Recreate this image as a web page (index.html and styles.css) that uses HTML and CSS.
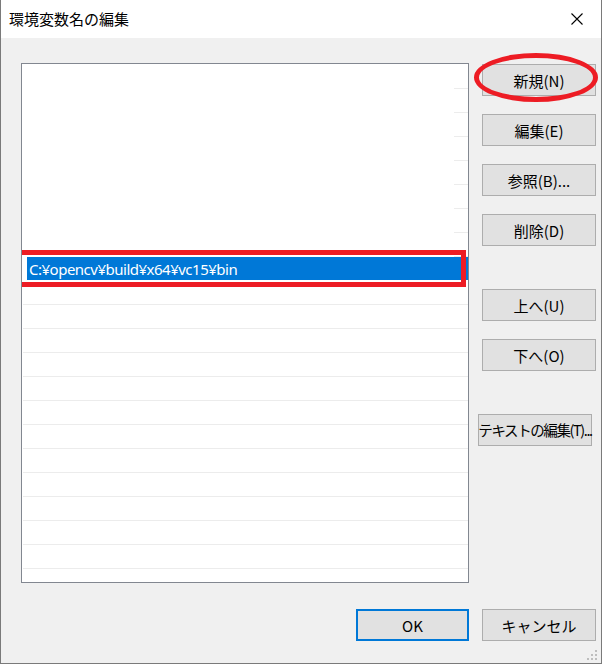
FILE: index.html
```html
<!DOCTYPE html>
<html lang="ja">
<head>
<meta charset="utf-8">
<title>環境変数名の編集</title>
<link rel="stylesheet" href="styles.css">
</head>
<body>
<div class="window">
  <div class="titlebar">
    <span class="title">環境変数名の編集</span>
    <span class="close">
      <svg width="12" height="12" viewBox="0 0 12 12"><path d="M0.5 0.5 L11.5 11.5 M11.5 0.5 L0.5 11.5" stroke="#000" stroke-width="1.1" fill="none"/></svg>
    </span>
  </div>
  <div class="main">
    <div class="list">
      <div class="row partial"></div>
      <div class="row partial"></div>
      <div class="row partial"></div>
      <div class="row partial"></div>
      <div class="row partial"></div>
      <div class="row partial"></div>
      <div class="row partial"></div>
      <div class="row partial"></div>
      <div class="row selected"><span class="sel">C:¥opencv¥build¥x64¥vc15¥bin</span></div>
      <div class="row"></div>
      <div class="row"></div>
      <div class="row"></div>
      <div class="row"></div>
      <div class="row"></div>
      <div class="row"></div>
      <div class="row"></div>
      <div class="row"></div>
      <div class="row"></div>
      <div class="row"></div>
      <div class="row"></div>
      <div class="row"></div>
      <div class="row"></div>
      <div class="mark-rect"></div>
    </div>
    <div class="buttons">
      <div class="btn first">新規(N)<span class="mark-ellipse"></span></div>
      <div class="btn">編集(E)</div>
      <div class="btn">参照(B)...</div>
      <div class="btn">削除(D)</div>
      <div class="btn group">上へ(U)</div>
      <div class="btn">下へ(O)</div>
      <div class="btn group shifted">テキストの編集(T)...</div>
    </div>
  </div>
  <div class="footer">
    <div class="btn default">OK</div>
    <div class="btn">キャンセル</div>
    <span class="grip">
      <svg width="12" height="12" viewBox="0 0 12 12" fill="#bdbdbd">
        <rect x="9" y="1" width="2" height="2"/>
        <rect x="5" y="5" width="2" height="2"/><rect x="9" y="5" width="2" height="2"/>
        <rect x="1" y="9" width="2" height="2"/><rect x="5" y="9" width="2" height="2"/><rect x="9" y="9" width="2" height="2"/>
      </svg>
    </span>
  </div>
</div>
</body>
</html>
```

FILE: styles.css
```css
* { box-sizing: border-box; }
html, body { margin: 0; padding: 0; }
body {
  font-family: "Noto Sans", "Noto Sans CJK JP", sans-serif;
  font-size: 15px;
  color: #000;
  background: #f0f0f0;
}
.window {
  width: 602px;
  height: 664px;
  background: #f0f0f0;
  border-left: 1px solid #7a7a7a;
  border-right: 1px solid #7a7a7a;
  border-bottom: 1px solid #7a7a7a;
  display: flex;
  flex-direction: column;
  position: relative;
}
.titlebar {
  height: 38px;
  background: #fff;
  display: flex;
  align-items: center;
  justify-content: space-between;
  padding-left: 8px;
}
.title {
  font-family: "Noto Sans CJK JP", sans-serif;
  font-size: 15px;
  line-height: 1;
  margin-top: -2px;
}
.close {
  width: 46px;
  height: 38px;
  display: flex;
  align-items: center;
  justify-content: center;
  margin-right: 1px;
}
.main {
  display: flex;
  padding: 25px 0 0 20px;
  gap: 13px;
}
.list {
  width: 448px;
  height: 520px;
  background: #fff;
  border: 1px solid #828790;
  position: relative;
  overflow: hidden;
}
.row {
  height: 24px;
  position: relative;
}
.row::after {
  content: "";
  position: absolute;
  left: 1px;
  right: 0;
  bottom: -1px;
  height: 1px;
  background: #ececec;
}
.row.partial::after {
  left: auto;
  width: 14px;
}
.row.selected::after { display: none; }
.row.selected {
  padding: 1px 0 0 5px;
}
.sel {
  display: flex;
  align-items: center;
  height: 23px;
  background: #0078d7;
  color: #fff;
  padding-left: 2px;
  font-size: 15px;
  letter-spacing: -0.5px;
}
.mark-rect {
  position: absolute;
  left: -5px;
  top: 186px;
  width: 449px;
  height: 37px;
  border: 5px solid #ed1c24;
}
.buttons {
  display: flex;
  flex-direction: column;
  gap: 18px;
  padding-top: 1px;
}
.btn {
  width: 114px;
  height: 32px;
  background: #e1e1e1;
  border: 1px solid #adadad;
  display: flex;
  align-items: center;
  justify-content: center;
  font-family: "Noto Sans CJK JP", sans-serif;
  font-size: 15px;
  line-height: 1;
  white-space: nowrap;
  position: relative;
}
.btn.group { margin-top: 25px; }
.btn.shifted { margin-left: -4px; letter-spacing: -1.4px; font-size: 14.5px; }
.mark-ellipse {
  position: absolute;
  left: -9px;
  top: -12px;
  width: 124px;
  height: 49px;
  border: 5px solid #ed1c24;
  border-radius: 50%;
}
.footer {
  display: flex;
  justify-content: flex-end;
  gap: 13px;
  padding-right: 5px;
  margin-top: 26px;
  position: relative;
}
.btn.default {
  width: 113px;
  border: 2px solid #0078d7;
}
.grip {
  position: absolute;
  right: 3px;
  top: 40px;
  width: 12px;
  height: 12px;
  display: block;
}
.grip svg { display: block; }
```
